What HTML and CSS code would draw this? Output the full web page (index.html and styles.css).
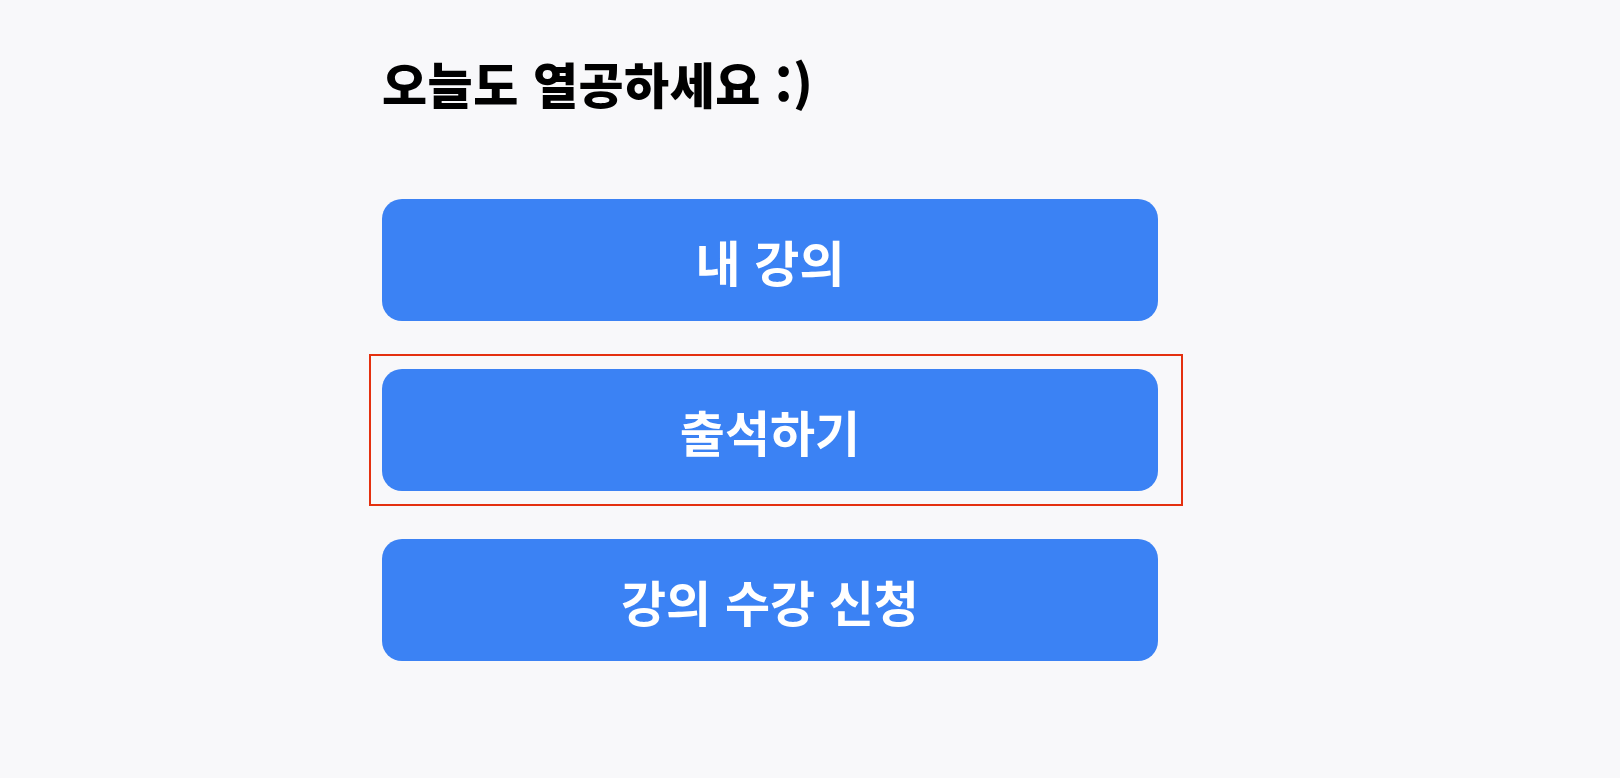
FILE: index.html
```html
<!DOCTYPE html>
<html lang="ko">
<head>
<meta charset="utf-8">
<title>오늘도 열공하세요</title>
<link rel="stylesheet" href="styles.css">
</head>
<body>
<main class="page">
  <h1 class="title">오늘도 열공하세요 :)</h1>
  <nav class="menu">
    <a class="btn" href="#">내 강의</a>
    <div class="focus-wrap">
      <a class="btn" href="#">출석하기</a>
      <span class="focus-ring"></span>
    </div>
    <a class="btn" href="#">강의 수강 신청</a>
  </nav>
</main>
</body>
</html>
```

FILE: styles.css
```css
html, body {
  margin: 0;
  padding: 0;
}
body {
  background: #f8f8fa;
  font-family: "Noto Sans CJK KR", "Noto Sans", sans-serif;
  width: 1620px;
  height: 778px;
  overflow: hidden;
}
.page {
  padding: 55px 0 0 382px;
  width: 776px;
}
.title {
  margin: 0;
  font-size: 49px;
  line-height: 55px;
  font-weight: 900;
  color: #000;
  letter-spacing: 0.5px;
}
.menu {
  margin-top: 89px;
  display: flex;
  flex-direction: column;
  gap: 48px;
}
.focus-wrap {
  position: relative;
}
.btn {
  display: flex;
  align-items: center;
  justify-content: center;
  height: 122px;
  border-radius: 20px;
  background: #3b82f4;
  color: #fff;
  font-size: 49px;
  font-weight: 700;
  text-decoration: none;
}
.focus-ring {
  position: absolute;
  left: -13px;
  top: -15px;
  right: -25px;
  bottom: -15px;
  border: 2px solid #e4300f;
  pointer-events: none;
}
```
